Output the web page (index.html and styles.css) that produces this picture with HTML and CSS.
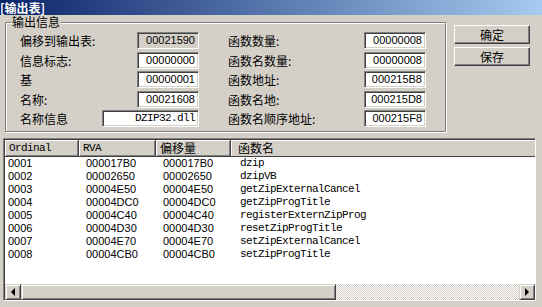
FILE: index.html
```html
<!DOCTYPE html>
<html lang="zh-CN">
<head>
    <meta charset="UTF-8">
    <title>输出表</title>
    <link rel="stylesheet" href="styles.css">
</head>
<body>
    <div class="titlebar">[输出表]</div>

    <div class="top">
        <fieldset class="group">
            <legend>输出信息</legend>
            <div class="grid">
                <span class="lbl">偏移到输出表:</span>
                <div class="field ro">00021590</div>
                <span></span>
                <span class="lbl">函数数量:</span>
                <div class="field">00000008</div>

                <span class="lbl">信息标志:</span>
                <div class="field">00000000</div>
                <span></span>
                <span class="lbl">函数名数量:</span>
                <div class="field">00000008</div>

                <span class="lbl">基</span>
                <div class="field">00000001</div>
                <span></span>
                <span class="lbl">函数地址:</span>
                <div class="field">000215B8</div>

                <span class="lbl">名称:</span>
                <div class="field">00021608</div>
                <span></span>
                <span class="lbl">函数名地:</span>
                <div class="field">000215D8</div>

                <div class="wide">
                    <span class="lbl">名称信息</span>
                    <div class="field mono">DZIP32.dll</div>
                </div>
                <span></span>
                <span class="lbl">函数名顺序地址:</span>
                <div class="field">000215F8</div>
            </div>
        </fieldset>

        <div class="buttons">
            <button class="btn">确定</button>
            <button class="btn">保存</button>
        </div>
    </div>

    <div class="list">
        <div class="head">
            <div class="hcell c1 mono">Ordinal</div>
            <div class="hcell c2 mono">RVA</div>
            <div class="hcell c3">偏移量</div>
            <div class="hcell c4">函数名</div>
        </div>
        <div class="rows">
            <div class="row"><span class="c1">0001</span><span class="c2">000017B0</span><span class="c3">000017B0</span><span class="c4 mono">dzip</span></div>
            <div class="row"><span class="c1">0002</span><span class="c2">00002650</span><span class="c3">00002650</span><span class="c4 mono">dzipVB</span></div>
            <div class="row"><span class="c1">0003</span><span class="c2">00004E50</span><span class="c3">00004E50</span><span class="c4 mono">getZipExternalCancel</span></div>
            <div class="row"><span class="c1">0004</span><span class="c2">00004DC0</span><span class="c3">00004DC0</span><span class="c4 mono">getZipProgTitle</span></div>
            <div class="row"><span class="c1">0005</span><span class="c2">00004C40</span><span class="c3">00004C40</span><span class="c4 mono">registerExternZipProg</span></div>
            <div class="row"><span class="c1">0006</span><span class="c2">00004D30</span><span class="c3">00004D30</span><span class="c4 mono">resetZipProgTitle</span></div>
            <div class="row"><span class="c1">0007</span><span class="c2">00004E70</span><span class="c3">00004E70</span><span class="c4 mono">setZipExternalCancel</span></div>
            <div class="row"><span class="c1">0008</span><span class="c2">00004CB0</span><span class="c3">00004CB0</span><span class="c4 mono">setZipProgTitle</span></div>
        </div>
        <div class="hscroll">
            <div class="sbtn"><span class="arrow-left"></span></div>
            <div class="thumb"></div>
            <div class="track"></div>
            <div class="sbtn"><span class="arrow-right"></span></div>
        </div>
    </div>
</body>
</html>
```

FILE: styles.css
```css
* {
    box-sizing: border-box;
    margin: 0;
    padding: 0;
}
body {
    width: 542px;
    height: 307px;
    overflow: hidden;
    background-color: #d4d0c8;
    font-family: "Noto Sans CJK SC", "Liberation Sans", sans-serif;
    font-size: 12px;
    color: #000;
}

.titlebar {
    height: 15px;
    line-height: 15px;
    font-weight: bold;
    color: #fff;
    background: linear-gradient(to right, #0a246a, #a6caf0);
    white-space: nowrap;
    overflow: hidden;
}

.top {
    display: flex;
    align-items: flex-start;
}
.group {
    width: 441px;
    height: 116px;
    margin: 1px 0 0 5px;
    border: 1px solid #808080;
    box-shadow: inset 1px 1px 0 #fff, 1px 1px 0 #fff;
    padding: 0;
}
.group legend {
    margin-left: 5px;
    padding: 0 1px;
    line-height: 12px;
    background-color: #d4d0c8;
}
.grid {
    display: grid;
    grid-template-columns: 117px 62px 29px 136px 62px;
    grid-auto-rows: 17px;
    row-gap: 2.5px;
    margin: 4px 0 0 14px;
}
.lbl {
    line-height: 17px;
    white-space: nowrap;
}
.wide {
    grid-column: 1 / 3;
    display: flex;
    justify-content: space-between;
}
.wide .field {
    width: 97px;
}
.field {
    height: 17px;
    line-height: 15px;
    background-color: #fff;
    border: 1px solid;
    border-color: #808080 #fff #fff #808080;
    box-shadow: inset 1px 1px 0 #404040, inset -1px -1px 0 #d4d0c8;
    text-align: right;
    padding-right: 3px;
    font-family: "Liberation Sans", sans-serif;
    font-size: 11px;
}
.field.ro {
    background-color: #d4d0c8;
}
.mono {
    font-family: "Liberation Mono", monospace;
    font-size: 11px;
    letter-spacing: -0.6px;
}

.buttons {
    display: flex;
    flex-direction: column;
    gap: 3px;
    margin: 10px 0 0 8px;
}
.btn {
    width: 76px;
    height: 19px;
    background-color: #d4d0c8;
    border: 1px solid;
    border-color: #fff #404040 #404040 #fff;
    box-shadow: inset -1px -1px 0 #808080;
    font-family: "Noto Sans CJK SC", sans-serif;
    font-size: 12px;
    line-height: 15px;
}

.list {
    width: 533px;
    height: 163px;
    margin: 6px 0 0 3px;
    border: 1px solid;
    border-color: #808080 #fff #fff #808080;
    display: flex;
    flex-direction: column;
    background-color: #fff;
    box-shadow: inset 1px 1px 0 #404040;
    padding: 1px 0 0 1px;
}
.head {
    display: flex;
    height: 17px;
    background-color: #d4d0c8;
}
.hcell {
    height: 17px;
    line-height: 16px;
    padding-left: 4px;
    border-right: 1px solid #404040;
    border-bottom: 1px solid #404040;
    box-shadow: inset 1px 1px 0 #fff, inset -1px -1px 0 #808080;
    white-space: nowrap;
}
.hcell.c1 { width: 74px; }
.hcell.c2 { width: 77px; }
.hcell.c3 { width: 75px; }
.hcell.c4 {
    flex: 1;
    padding-left: 7px;
    border-right: none;
    box-shadow: inset 1px 1px 0 #fff;
}

.rows {
    flex: 1;
}
.row {
    display: flex;
    height: 13px;
    line-height: 13px;
    font-family: "Liberation Sans", sans-serif;
    font-size: 11px;
    white-space: nowrap;
}
.row .c1 { width: 77px; padding-left: 3px; }
.row .c2 { width: 77px; padding-left: 4px; }
.row .c3 { width: 77px; padding-left: 4px; }
.row .c4 { padding-left: 4px; }

.hscroll {
    display: flex;
    height: 16px;
    background-color: #d4d0c8;
}
.sbtn {
    width: 16px;
    height: 16px;
    background-color: #d4d0c8;
    border: 1px solid;
    border-color: #d4d0c8 #404040 #404040 #d4d0c8;
    box-shadow: inset 1px 1px 0 #fff, inset -1px -1px 0 #808080;
    display: flex;
    align-items: center;
    justify-content: center;
}
.arrow-left {
    border-top: 4px solid transparent;
    border-bottom: 4px solid transparent;
    border-right: 4px solid #000;
}
.arrow-right {
    border-top: 4px solid transparent;
    border-bottom: 4px solid transparent;
    border-left: 4px solid #000;
}
.thumb {
    width: 315px;
    height: 16px;
    border: 1px solid;
    border-color: #d4d0c8 #404040 #404040 #d4d0c8;
    box-shadow: inset 1px 1px 0 #fff, inset -1px -1px 0 #808080;
}
.track {
    flex: 1;
    background: repeating-conic-gradient(#fff 0 25%, #d4d0c8 0 50%) 0 0 / 2px 2px;
}
```
